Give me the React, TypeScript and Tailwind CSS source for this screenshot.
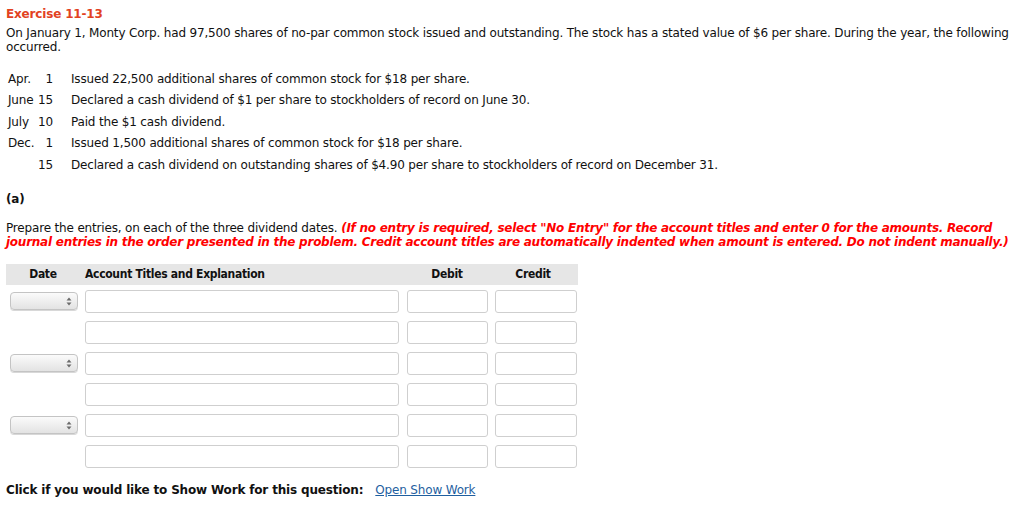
import React from 'react';

const events = [
  { month: 'Apr.', day: '1', text: 'Issued 22,500 additional shares of common stock for $18 per share.' },
  { month: 'June', day: '15', text: 'Declared a cash dividend of $1 per share to stockholders of record on June 30.' },
  { month: 'July', day: '10', text: 'Paid the $1 cash dividend.' },
  { month: 'Dec.', day: '1', text: 'Issued 1,500 additional shares of common stock for $18 per share.' },
  { month: '', day: '15', text: 'Declared a cash dividend on outstanding shares of $4.90 per share to stockholders of record on December 31.' },
];

const rows = [true, false, true, false, true, false];

const inputCls = 'h-[23px] rounded-[3px] border border-[#cfcfcf] bg-white';

function DateSelect() {
  return (
    <div className="h-[18px] w-[68px] rounded-[4px] border border-[#c4c4c4] bg-gradient-to-b from-[#fbfbfb] to-[#e3e3e3] flex items-center justify-end pr-[5px] shadow-[0_1px_0_#d8d8d8]">
      <svg width="6" height="9" viewBox="0 0 6 9">
        <path d="M3 0.5 L5.5 3.5 H0.5 Z" fill="#6b6b6b" />
        <path d="M3 8.5 L5.5 5.5 H0.5 Z" fill="#6b6b6b" />
      </svg>
    </div>
  );
}

export default function App() {
  return (
    <div className="w-[1024px] h-[518px] bg-white text-[#111] text-[12px] leading-[14px] tracking-[-0.17px] px-[6px] pt-[7px]" style={{ fontFamily: '"DejaVu Sans", Verdana, sans-serif' }}>
      <div className="font-bold text-[#e2421f]">Exercise 11-13</div>
      <p className="mt-[5px]">
        On January 1, Monty Corp. had 97,500 shares of no-par common stock issued and outstanding. The stock has a stated value of $6 per share. During the year, the following occurred.
      </p>

      <div className="mt-[14px] flex flex-col">
        {events.map((e, i) => (
          <div key={i} className="flex h-[21.5px] items-center">
            <div className="w-[47px] pl-[2px] flex justify-between">
              <span>{e.month}</span>
              <span>{e.day}</span>
            </div>
            <div className="ml-[18px]">{e.text}</div>
          </div>
        ))}
      </div>

      <div className="mt-[16px] font-bold">(a)</div>

      <p className="mt-[15px]">
        Prepare the entries, on each of the three dividend dates.{' '}
        <span className="font-bold italic text-[#ff0000] tracking-[-0.25px]">
          (If no entry is required, select "No Entry" for the account titles and enter 0 for the amounts. Record journal entries in the order presented in the problem. Credit account titles are automatically indented when amount is entered. Do not indent manually.)
        </span>
      </p>

      <div className="mt-[15px] w-[572px] tracking-[-0.3px]" style={{ fontFamily: 'Tahoma, "DejaVu Sans Condensed", sans-serif' }}>
        <div className="h-[21px] bg-[#e6e6e6] flex items-center font-bold">
          <div className="w-[74px] text-center">Date</div>
          <div className="w-[322px] pl-[5px]">Account Titles and Explanation</div>
          <div className="w-[87px] text-center pl-[3px]">Debit</div>
          <div className="w-[88px] text-center">Credit</div>
        </div>
        <div className="flex flex-col gap-[8px] pt-[5px]">
          {rows.map((hasDate, i) => (
            <div key={i} className="flex items-center">
              <div className="w-[79px] pl-[4px]">{hasDate && <DateSelect />}</div>
              <div className={`${inputCls} w-[314px]`} />
              <div className={`${inputCls} w-[81px] ml-[8px]`} />
              <div className={`${inputCls} w-[82px] ml-[7px]`} />
            </div>
          ))}
        </div>
      </div>

      <div className="mt-[15px] flex items-center">
        <span className="font-bold">Click if you would like to Show Work for this question:</span>
        <span className="ml-[12px] text-[#1f5f9f] underline">Open Show Work</span>
      </div>
    </div>
  );
}
